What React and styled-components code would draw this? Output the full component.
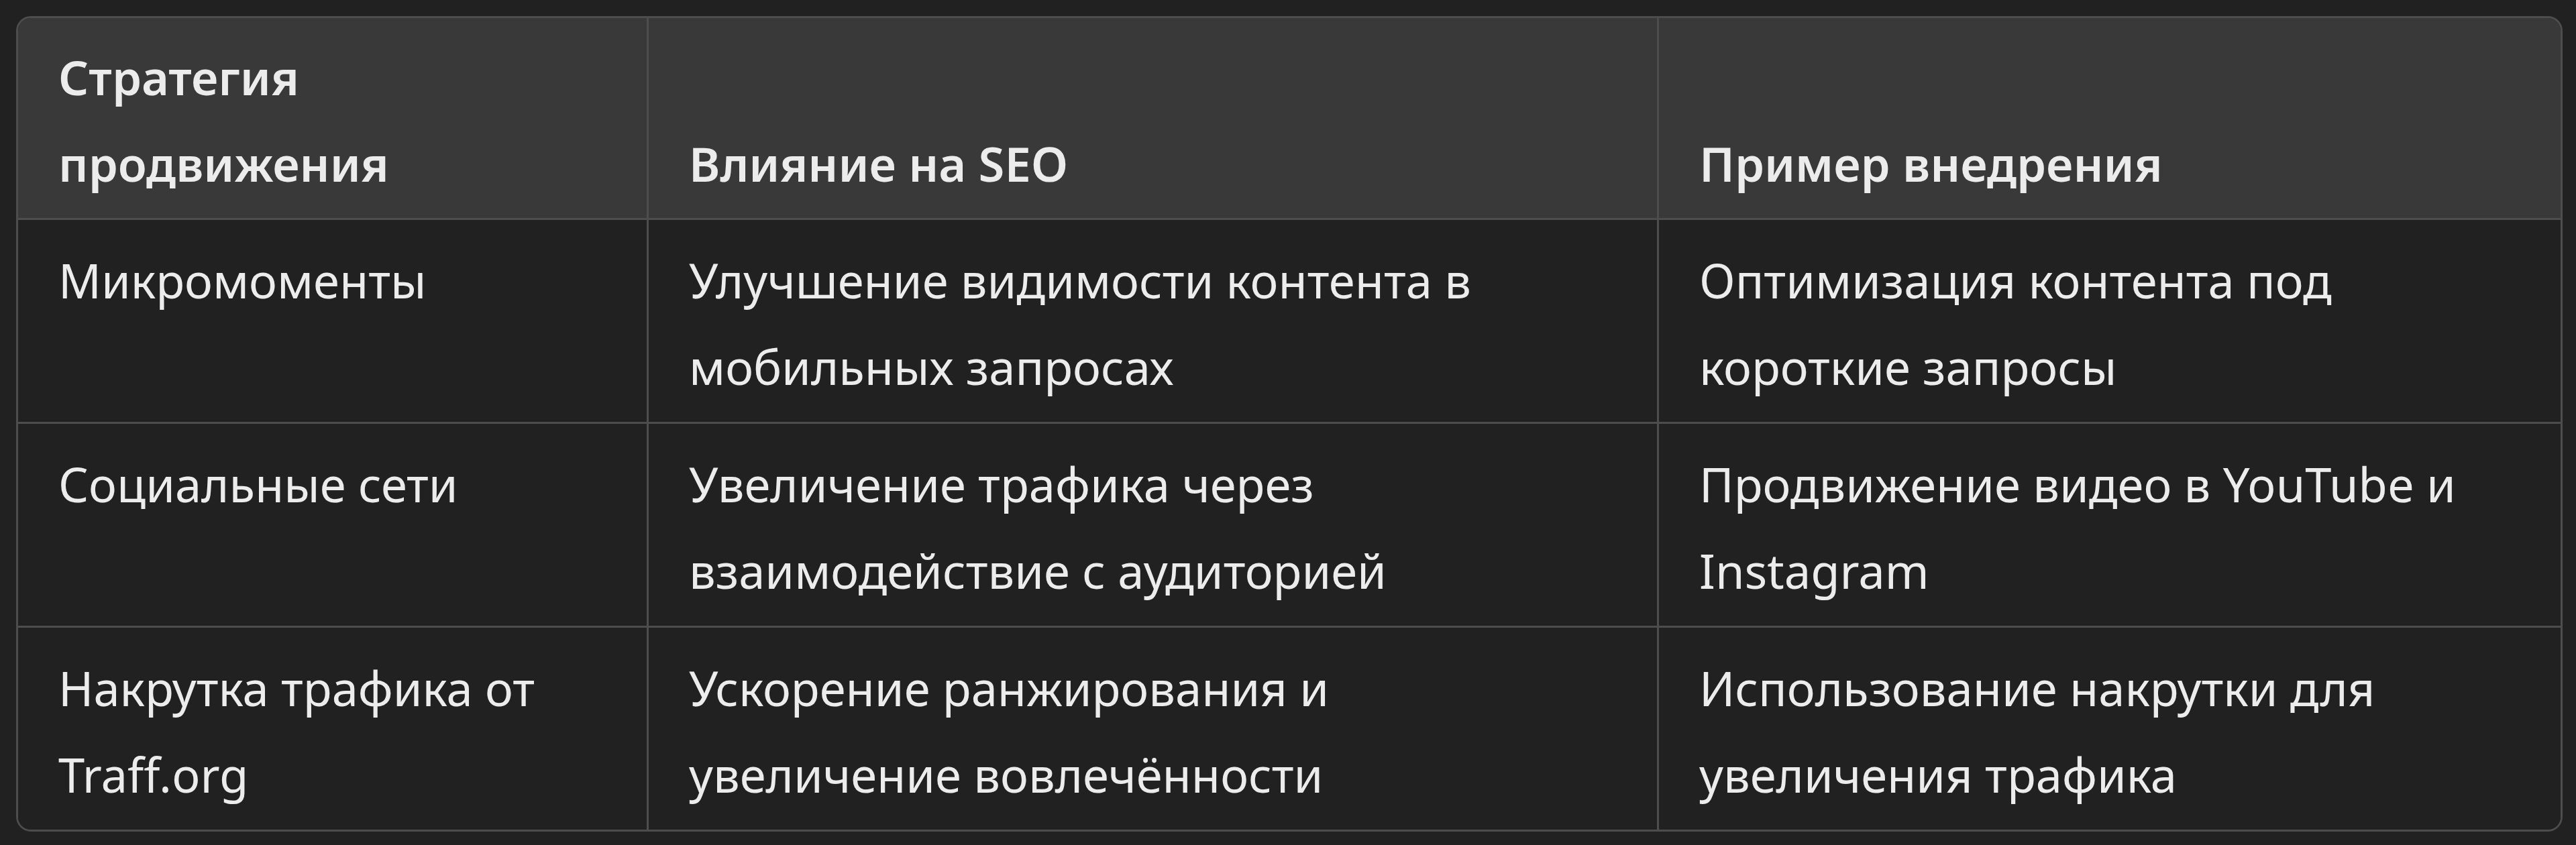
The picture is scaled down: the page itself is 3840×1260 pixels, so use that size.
import React from "react";
import styled, { createGlobalStyle } from "styled-components";

const GlobalStyle = createGlobalStyle`
  html, body {
    margin: 0;
    padding: 0;
    background: #212121;
  }
  body {
    font-family: "Noto Sans", "Open Sans", "DejaVu Sans", sans-serif;
    color: #ececec;
  }
`;

const Page = styled.div`
  width: 3840px;
  height: 1260px;
  box-sizing: border-box;
  padding: 24px 20px 0 24px;
  background: #212121;
`;

const Frame = styled.div`
  border: 3px solid #4d4d4d;
  border-radius: 22px;
  overflow: hidden;
`;

const Table = styled.table`
  width: 100%;
  border-collapse: separate;
  border-spacing: 0;
  table-layout: fixed;
  font-size: 70.5px;
  line-height: 129px;
`;

const HeadRow = styled.tr`
  background: #393939;
`;

const Row = styled.tr`
  background: #212121;
`;

const Th = styled.th`
  text-align: left;
  vertical-align: bottom;
  font-weight: 600;
  padding: 24px 60px 16px 60px;
  border-right: ${(p) => (p.$last ? "none" : "3px solid #4d4d4d")};
  border-bottom: 3px solid #4d4d4d;
`;

const Td = styled.td`
  vertical-align: top;
  font-weight: 400;
  padding: 26px 60px 17px 60px;
  border-right: ${(p) => (p.$last ? "none" : "3px solid #4d4d4d")};
  border-bottom: ${(p) => (p.$bottom ? "none" : "3px solid #4d4d4d")};
`;

const headers = [["Стратегия", "продвижения"], ["Влияние на SEO"], ["Пример внедрения"]];

const rows = [
  [
    ["Микромоменты"],
    ["Улучшение видимости контента в", "мобильных запросах"],
    ["Оптимизация контента под", "короткие запросы"],
  ],
  [
    ["Социальные сети"],
    ["Увеличение трафика через", "взаимодействие с аудиторией"],
    ["Продвижение видео в YouTube и", "Instagram"],
  ],
  [
    ["Накрутка трафика от", "Traff.org"],
    ["Ускорение ранжирования и", "увеличение вовлечённости"],
    ["Использование накрутки для", "увеличения трафика"],
  ],
];

const Lines = ({ lines }) =>
  lines.map((line, i) => (
    <React.Fragment key={i}>
      {i > 0 && <br />}
      {line}
    </React.Fragment>
  ));

export default function App() {
  return (
    <Page>
      <GlobalStyle />
      <Frame>
        <Table>
          <colgroup>
            <col style={{ width: 940 }} />
            <col style={{ width: 1506 }} />
            <col />
          </colgroup>
          <thead>
            <HeadRow>
              {headers.map((h, i) => (
                <Th key={i} $last={i === headers.length - 1}>
                  <Lines lines={h} />
                </Th>
              ))}
            </HeadRow>
          </thead>
          <tbody>
            {rows.map((r, ri) => (
              <Row key={ri}>
                {r.map((c, ci) => (
                  <Td key={ci} $last={ci === r.length - 1} $bottom={ri === rows.length - 1}>
                    <Lines lines={c} />
                  </Td>
                ))}
              </Row>
            ))}
          </tbody>
        </Table>
      </Frame>
    </Page>
  );
}
